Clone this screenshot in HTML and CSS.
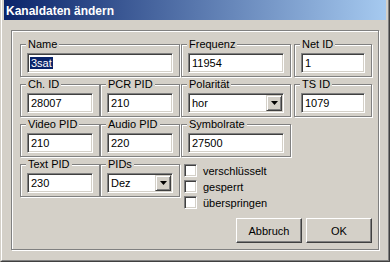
FILE: index.html
```html
<!DOCTYPE html>
<html lang="de">
  <head>
    <meta charset="UTF-8" />
    <title>Kanaldaten ändern</title>
    <link rel="stylesheet" href="styles.css">
  </head>
  <body>
    <div class="window">
      <div class="window-inner">
        <div class="titlebar">Kanaldaten ändern</div>
        <div class="frame">
          <div class="groups">
            <div class="group span2">
              <span class="legend">Name</span>
              <div class="field"><span class="sel">3sat</span></div>
            </div>
            <div class="group col3">
              <span class="legend">Frequenz</span>
              <div class="field">11954</div>
            </div>
            <div class="group">
              <span class="legend">Net ID</span>
              <div class="field">1</div>
            </div>

            <div class="group">
              <span class="legend">Ch. ID</span>
              <div class="field">28007</div>
            </div>
            <div class="group">
              <span class="legend">PCR PID</span>
              <div class="field">210</div>
            </div>
            <div class="group col3">
              <span class="legend">Polarität</span>
              <div class="field combo">
                <span class="combo-text">hor</span>
                <span class="drop"><svg width="7" height="4" viewBox="0 0 7 4"><polygon points="0,0 7,0 3.5,4" fill="#000"/></svg></span>
              </div>
            </div>
            <div class="group">
              <span class="legend">TS ID</span>
              <div class="field">1079</div>
            </div>

            <div class="group">
              <span class="legend">Video PID</span>
              <div class="field">210</div>
            </div>
            <div class="group">
              <span class="legend">Audio PID</span>
              <div class="field">220</div>
            </div>
            <div class="group col3">
              <span class="legend">Symbolrate</span>
              <div class="field">27500</div>
            </div>
            <div></div>

            <div class="group">
              <span class="legend">Text PID</span>
              <div class="field">230</div>
            </div>
            <div class="group">
              <span class="legend">PIDs</span>
              <div class="field combo">
                <span class="combo-text">Dez</span>
                <span class="drop"><svg width="7" height="4" viewBox="0 0 7 4"><polygon points="0,0 7,0 3.5,4" fill="#000"/></svg></span>
              </div>
            </div>
            <div class="checks">
              <label class="check"><span class="box"></span>verschlüsselt</label>
              <label class="check"><span class="box"></span>gesperrt</label>
              <label class="check"><span class="box"></span>überspringen</label>
            </div>
          </div>

          <div class="actions">
            <button class="btn">Abbruch</button>
            <button class="btn">OK</button>
          </div>
        </div>
      </div>
    </div>
  </body>
</html>
```

FILE: styles.css
```css
body {
  margin: 0;
  background-color: #d4d0c8;
  font-family: "Liberation Sans", Arial, sans-serif;
  font-size: 11px;
  color: #000;
}
.window {
  width: 390px;
  height: 262px;
  box-sizing: border-box;
  border: 1px solid;
  border-top: 0;
  border-color: #d4d0c8 #404040 #404040 #d4d0c8;
}
.window-inner {
  height: 100%;
  box-sizing: border-box;
  border: 1px solid;
  border-top: 0;
  border-color: #fff #808080 #808080 #fff;
  padding: 0 2px 2px 2px;
}
.titlebar {
  height: 20px;
  line-height: 23px;
  padding-left: 2px;
  background: linear-gradient(to right, #0a246a, #a6caf0);
  color: #fff;
  font-weight: bold;
  font-size: 12px;
  overflow: hidden;
}
.frame {
  margin: 10px 0 0 7px;
  width: 368px;
  height: 220px;
  box-sizing: border-box;
  border: 1px solid #808080;
  box-shadow: inset 1px 1px 0 #fff, 1px 1px 0 #fff;
  padding: 13px 6px 0 8px;
}
.groups {
  display: grid;
  grid-template-columns: 80px 80px 114px 78px;
  grid-template-rows: repeat(4, 33px);
  row-gap: 7px;
}
.group {
  position: relative;
  border: 1px solid #808080;
  box-shadow: inset 1px 1px 0 #fff, 1px 1px 0 #fff;
  padding: 8px 6px 0;
}
.span2 {
  grid-column: span 2;
}
.col3 {
  margin: 0 3px 0 1px;
}
.legend {
  position: absolute;
  top: -7px;
  left: 5px;
  padding: 0 2px;
  line-height: 13px;
  background-color: #d4d0c8;
}
.field {
  height: 20px;
  box-sizing: border-box;
  border: 1px solid;
  border-color: #808080 #fff #fff #808080;
  box-shadow: inset 1px 1px 0 #404040, inset -1px -1px 0 #d4d0c8;
  background-color: #fff;
  padding-left: 3px;
  line-height: 18px;
  white-space: nowrap;
}
.sel {
  margin-left: -1px;
  padding: 0 1px;
  background-color: #0a246a;
  color: #fff;
}
.combo {
  display: flex;
  align-items: center;
  padding-right: 1px;
}
.combo-text {
  flex: 1;
}
.drop {
  width: 16px;
  height: 16px;
  box-sizing: border-box;
  border: 1px solid;
  border-color: #d4d0c8 #404040 #404040 #d4d0c8;
  box-shadow: inset 1px 1px 0 #fff, inset -1px -1px 0 #808080;
  background-color: #d4d0c8;
  display: flex;
  align-items: center;
  justify-content: center;
}
.drop svg {
  display: block;
}
.checks {
  grid-column: 3 / span 2;
  padding-left: 4px;
  display: flex;
  flex-direction: column;
  gap: 3px;
}
.check {
  display: flex;
  align-items: center;
  gap: 6px;
  height: 13px;
}
.box {
  width: 13px;
  height: 13px;
  box-sizing: border-box;
  border: 1px solid;
  border-color: #808080 #fff #fff #808080;
  box-shadow: inset 1px 1px 0 #404040, inset -1px -1px 0 #d4d0c8;
  background-color: #fff;
}
.actions {
  display: flex;
  justify-content: flex-end;
  gap: 4px;
  margin-top: 21px;
}
.btn {
  width: 66px;
  height: 25px;
  padding: 0;
  border: 1px solid;
  border-color: #fff #404040 #404040 #fff;
  box-shadow: inset -1px -1px 0 #808080;
  background-color: #d4d0c8;
  font-family: "Liberation Sans", Arial, sans-serif;
  font-size: 11px;
  color: #000;
}
```
